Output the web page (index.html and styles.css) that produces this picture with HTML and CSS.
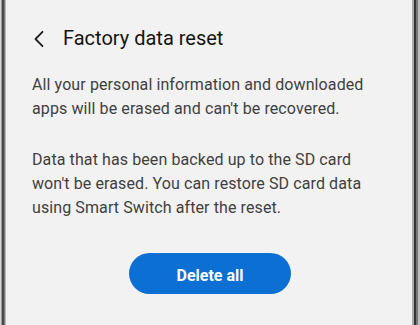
FILE: index.html
```html
<!DOCTYPE html>
<html lang="en">
<head>
<meta charset="utf-8">
<title>Factory data reset</title>
<link rel="stylesheet" href="styles.css">
</head>
<body>
<div class="phone">
  <div class="bezel bezel-left"></div>
  <main class="screen">
    <header class="header">
      <svg class="back" width="12" height="18" viewBox="0 0 12 18" aria-hidden="true">
        <path d="M9.5 1.8 L2.5 9 L9.5 16.2" fill="none" stroke="#1e1e1e" stroke-width="1.8" stroke-linecap="round" stroke-linejoin="round"/>
      </svg>
      <h1 class="title">Factory data reset</h1>
    </header>
    <p class="para para-first">All your personal information and downloaded<br>apps will be erased and can't be recovered.</p>
    <p class="para para-second">Data that has been backed up to the SD card<br>won't be erased. You can restore SD card data<br>using Smart Switch after the reset.</p>
    <div class="actions">
      <button class="btn" type="button">Delete all</button>
    </div>
  </main>
  <div class="bezel bezel-right"></div>
</div>
</body>
</html>
```

FILE: styles.css
```css
* { box-sizing: border-box; }
html, body {
  margin: 0;
  padding: 0;
  width: 420px;
  height: 325px;
  overflow: hidden;
  background: #f2f2f2;
  font-family: Roboto, "Liberation Sans", Arial, sans-serif;
}
.phone {
  display: flex;
  width: 420px;
  height: 325px;
}
.bezel { flex: none; height: 100%; }
.bezel-left {
  width: 6px;
  background: linear-gradient(to right,
    #d4d4d4 0 1px, #999 1px 2px, #4a4a4a 2px 4px, #7c7c7c 4px 5px, #b9b9b9 5px 6px);
}
.bezel-right {
  width: 8px;
  background: linear-gradient(to right,
    #ababab 0 2px, #353535 2px 4px, #777 4px 6px, #bdbdbd 6px 8px);
}
.screen {
  flex: 1;
  background: #f2f2f2;
  padding: 24px 0 0 26px;
}
.header {
  display: flex;
  align-items: center;
  height: 28px;
}
.back {
  display: block;
  margin-left: 1px;
  margin-right: 18px;
  margin-top: 1px;
  flex: none;
}
.title {
  margin: 0;
  font-size: 20px;
  line-height: 28px;
  font-weight: 400;
  color: #141414;
}
.para {
  margin: 0;
  font-size: 16px;
  line-height: 24px;
  color: #3f3f3f;
  white-space: nowrap;
  letter-spacing: 0.1px;
}
.para-first { margin-top: 20.5px; }
.para-second { margin-top: 27px; }
.actions {
  display: flex;
  justify-content: center;
  margin-top: 33.5px;
  margin-left: -24px;
}
.btn {
  width: 162px;
  height: 41px;
  border: none;
  border-radius: 21px;
  background: #0b6fd3;
  color: #fff;
  font-family: Roboto, "Liberation Sans", Arial, sans-serif;
  font-size: 16px;
  font-weight: 700;
  line-height: 41px;
  padding: 2px 0 0 0;
}
```
